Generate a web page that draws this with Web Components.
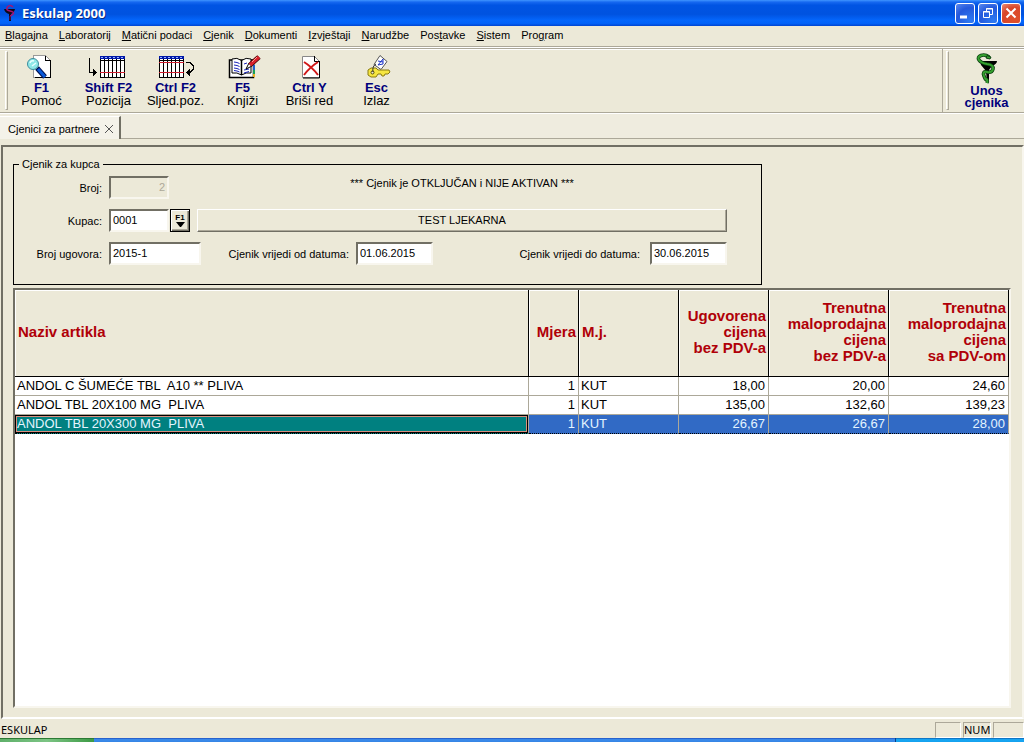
<!DOCTYPE html>
<html lang="hr">
<head>
<meta charset="utf-8">
<title>Eskulap 2000</title>
<style>
  html, body { height: 100%; }
  body {
    margin: 0;
    --face: #ece9d8;
    --shadow: #aca899;
    --dark: #716f64;
    --navy: #00007b;
    background: var(--face);
    color: #000;
    font: 11px/14px "Liberation Sans", Arial, sans-serif;
  }
</style>
</head>
<body>
<eskulap-app></eskulap-app>

<script>
const define = (name, html, setup) => {
  const template = document.createElement('template');
  template.innerHTML = html;
  customElements.define(name, class extends HTMLElement {
    constructor() {
      super();
      this.attachShadow({ mode: 'open' }).append(template.content.cloneNode(true));
    }
    connectedCallback() {
      if (setup && !this.ready) { this.ready = true; setup(this, this.shadowRoot); }
    }
  });
};

/* ---------- icons ---------- */
const ICONS = {
  help: `<svg width="30" height="24" viewBox="0 0 30 24" shape-rendering="crispEdges">
    <path d="M6.500 .5h12l5 5v17h-17z" fill="#fff" stroke="#999"/><path d="M18.500 .5v5h5M23.500 5v17.500H8" fill="none" stroke="#000"/>
    <g shape-rendering="auto"><path d="M10 13l8 9" stroke="#001050" stroke-width="5"/><path d="M11 14l7 8" stroke="#0a5ad8" stroke-width="3"/>
    <circle cx="6" cy="9" r="5.500" fill="#8fe8e8" stroke="#3c8c9c"/><path d="M3 8q1-3 4-2M5 11l4-3" stroke="#e8ffff" stroke-width="1.500" fill="none"/></g></svg>`,
  position: `<svg width="40" height="24" viewBox="0 0 40 24" shape-rendering="crispEdges">
    <rect x="11" y="1" width="25" height="22" fill="#fff"/>
    <path d="M11 5.500h25M11.500 4v19M15.500 4v19M19.500 4v19M23.500 4v19M27.500 4v19M31.500 4v19M35.500 4v19M11 22.500h25" stroke="#000"/>
    <path d="M11 2.500h25" stroke="#0018a8" stroke-width="3"/><path d="M12 2.500h24" stroke="#9ab0ff" stroke-dasharray="2 2"/><path d="M11 17.500h25" stroke="#d02030"/>
    <path d="M.5 3v14.500h6" stroke="#000" fill="none"/><path d="M4 14l4 3.500-4 3.500z"/></svg>`,
  next: `<svg width="36" height="24" viewBox="0 0 36 24" shape-rendering="crispEdges">
    <rect x="1" y="1" width="25" height="22" fill="#fff"/>
    <path d="M1 5.500h25M1.500 4v19M5.500 4v19M9.500 4v19M13.500 4v19M17.500 4v19M21.500 4v19M25.500 4v19M1 22.500h25" stroke="#000"/>
    <path d="M1 2.500h25" stroke="#0018a8" stroke-width="3"/><path d="M2 2.500h24" stroke="#9ab0ff" stroke-dasharray="2 2"/><path d="M1 7.500h25M1 17.500h25" stroke="#d02030"/>
    <path d="M28 7.500h4l3 3v4l-3 3h-2" stroke="#000" fill="none"/><path d="M32 14l-4 3.500 4 3.500z"/></svg>`,
  book: `<svg width="36" height="24" viewBox="-4 0 36 24">
    <path d="M.5 5v17.500h24V5z" fill="#fff" stroke="#000" stroke-width="1.500"/><path d="M24 10h2v12h-2z" fill="#18a058"/><path d="M24 10h2v5h-2z" fill="#1c62d0"/><path d="M24 19h2v3h-2z" fill="#e8b020"/>
    <path d="M3 4q5-2 9.500 1.500Q17 2 22 4v14q-5-1-9.500 2Q8 17 3 18z" fill="#fff" stroke="#000"/><path d="M12.500 5v15" stroke="#000" stroke-width="1.500"/>
    <path d="M5 7l3 .5 2.500 1M5 10l3 .5 2.500 1M5 13l3 .5 2.500 1M5 15.500l3 .5 2.500 1M15 9l3-1M15 15l5-1M15 18l5-1.500" stroke="#1822b8" fill="none"/>
    <path d="M17 14l3-6 3 3z" fill="#fff" stroke="#000"/><path d="M21 10l9-8" stroke="#400" stroke-width="5"/><path d="M21 10l9-8" stroke="#d8202c" stroke-width="3.500"/><path d="M23 7l5-5" stroke="#ff9a90"/></svg>`,
  remove: `<svg width="23" height="24" viewBox="-4 0 23 24">
    <path d="M.5 1.500h12l5 5v16H.5z" fill="#fff" stroke="#888"/><path d="M12.500 1v5.500H18M17.500 6v17H1" stroke="#000" fill="none"/>
    <path d="M2 7q8 5 14 13M16 7Q8 12 2 20" stroke="#d01818" stroke-width="2" fill="none"/></svg>`,
  exit: `<svg width="28" height="24" viewBox="-4 0 28 24">
    <path d="M13 .5l7 6-6 8-7-5z" fill="#fff" stroke="#555"/><path d="M11 10l5-6v5zM11 6l5 1" stroke="#1d35c8" fill="none"/>
    <path d="M4 13h5l2 2h11l1 2-2 2h-3l-1 2h-2l-1-2h-3l-2 3H4l-3-2v-5z" fill="#f6e640" stroke="#8a7a10"/><circle cx="5.500" cy="17.500" r="1.500" fill="#ece9d8" stroke="#554a00"/><path d="M6 17q-1-6 3-8" stroke="#333" fill="none"/></svg>`,
  snake: `<svg width="26" height="32" viewBox="0 0 26 32">
    <path d="M6 8h17q0 3-5 5l-3 4v12l-2 1-1-12-5-6z" fill="#000"/>
    <path d="M15 4Q11 1 7 2.500T5 7q2 3 8 4 7 1 6 5t-6 3-3 4 2 3q2 1 1 4" fill="none" stroke="#0a4010" stroke-width="3.500"/>
    <path d="M15 4Q11 1 7 2.500T5 7q2 3 8 4 7 1 6 5t-6 3-3 4 2 3q2 1 1 4" fill="none" stroke="#35a02f" stroke-width="2"/>
    <path d="M13 2.500l4 1.500-1 2-4-1z" fill="#35a02f" stroke="#0a4010"/></svg>`,
  logo: `<svg width="12" height="17" viewBox="0 0 12 17">
    <path d="M0 4h11q-1 4-4 5v7H5V9Q1 8 0 4z" fill="#120818"/>
    <path d="M9 2Q6-1 3.500 2T6 6t3 3-3 2" fill="none" stroke="#a81470" stroke-width="1.500"/><path d="M6 11v4" stroke="#701058"/></svg>`
};
define('app-icon', `
  <style>:host { display: block; } svg { display: block; overflow: visible; }</style>`,
  (host, root) => root.append(document.createRange().createContextualFragment(ICONS[host.getAttribute('name')])));

/* ---------- title bar ---------- */
define('title-bar', `
  <style>
    :host { display: flex; align-items: center; height: 26px; padding: 0 3px 0 4px; box-sizing: border-box; gap: 3px;
      background: linear-gradient(#3f95ff, #1668f0 8%, #0054e3 20%, #0053e0 55%, #0466fc 78%, #0262f8 90%, #0144d0); }
    h1 { flex: 1; margin: 0 0 0 3px; color: #fff; font: bold 13px/18px "Noto Sans", sans-serif; text-shadow: 1px 1px #0a2c86; }
    button { width: 20px; height: 21px; padding: 0; display: grid; place-items: center; border: 1px solid #fff; border-radius: 3px;
      background: radial-gradient(circle at 80% 90%, #2f7bf2, #2459dc 60%, #5b8af0); }
    button.close { background: radial-gradient(circle at 70% 80%, #e0502a, #d8472a 60%, #ec8f78); }
    svg { display: block; }
  </style>
  <app-icon name="logo"></app-icon>
  <h1><slot></slot></h1>
  <button aria-label="Minimiziraj"><svg width="14" height="14"><path d="M2 11h7" stroke="#fff" stroke-width="3"/></svg></button>
  <button aria-label="Obnovi"><svg width="14" height="14" fill="none" stroke="#fff"><path d="M5.500 5V2.500h6v6H9M5 3h7M2.500 5.500h6v6h-6zM2 6h7"/></svg></button>
  <button class="close" aria-label="Zatvori"><svg width="14" height="14"><path d="M2.500 2.500l9 9M11.500 2.500l-9 9" stroke="#fff" stroke-width="2"/></svg></button>
`);

/* ---------- menu ---------- */
define('menu-bar', `
  <style>
    :host { display: flex; gap: 11px; height: 18px; padding: 0 5px 2px; align-items: center;
      border-bottom: 1px solid var(--shadow); box-shadow: 0 1px #fff; }
  </style>
  <slot></slot>`);
define('menu-item', `
  <style>
    :host { display: block; }
    button { font: inherit; color: inherit; background: none; border: 0; padding: 0; display: block; white-space: nowrap; }
  </style>
  <button><slot></slot></button>`);

/* ---------- toolbar ---------- */
define('tool-bar', `
  <style>
    :host { display: flex; height: 65px; margin-top: 1px; box-sizing: border-box; border-top: 1px solid var(--shadow);
      border-bottom: 1px solid var(--shadow); box-shadow: 0 1px #fff, inset 0 1px #fff; }
    .band { display: flex; padding: 0 0 0 5px; }
    .main { flex: 1; border-right: 1px solid var(--shadow); }
    .side { width: 81px; box-sizing: border-box; padding-left: 3px; }
    .grip { width: 3px; margin: 2px 0; box-sizing: border-box; border: 1px solid #fff; border-right-color: var(--shadow); border-bottom-color: var(--shadow); }
    .side ::slotted(*) { flex: 1; }
  </style>
  <div class="band main"><span class="grip"></span><slot></slot></div>
  <div class="band side"><span class="grip"></span><slot name="side"></slot></div>`);
define('tool-button', `
  <style>
    :host { display: block; width: 67px; }
    button { width: 100%; height: 100%; padding: 6px 0 0; border: 0; background: none; color: inherit; font: 13px/13px "Liberation Sans", sans-serif;
      display: flex; flex-direction: column; align-items: center; white-space: nowrap; }
    b { margin-top: 2px; font-weight: bold; color: var(--navy); }
    :host([tall]) button { padding-top: 4px; }
    :host([tall]) b { margin-top: 0; line-height: 12px; }
    :host([tall]) span { display: block; }
  </style>
  <button><app-icon></app-icon><b></b><slot></slot></button>`,
  (host, root) => {
    const icon = document.createElement('app-icon');
    icon.setAttribute('name', host.getAttribute('icon'));
    root.querySelector('app-icon').replaceWith(icon);
    root.querySelector('b').innerHTML = host.getAttribute('keys').split('|').map(t => `<span>${t}</span>`).join('');
  });

/* ---------- tabs ---------- */
define('tab-strip', `
  <style>
    :host { display: flex; align-items: flex-end; height: 25px; box-sizing: border-box; margin-top: 1px; background: #efecdf; }
    .tab { display: flex; align-items: center; justify-content: space-between; height: 23px; width: 121px; box-sizing: border-box; padding: 2px 6px 0 8px;
      border-right: 2px solid var(--dark); border-top: 1px solid #fff; background: #f4f2e9; white-space: nowrap; }
    .rest { flex: 1; border-bottom: 1px solid var(--shadow); }
    button { padding: 0; border: 0; background: none; display: block; }
    svg { display: block; }
  </style>
  <div class="tab"><slot></slot><button aria-label="Zatvori karticu"><svg width="8" height="8"><path d="M0 0l8 8M8 0l-8 8" stroke="#555"/></svg></button></div>
  <div class="rest"></div>`);

/* ---------- form parts ---------- */
define('form-field', `
  <style>
    :host { display: flex; align-items: center; gap: 7px; }
    label { width: var(--label, auto); text-align: right; white-space: nowrap; }
    input { width: var(--box, 60px); height: 23px; box-sizing: border-box; padding: 0 2px 2px; margin: 0; background: #fff; color: #000;
      border: 2px solid; border-color: var(--dark) #f8f6ee #f8f6ee var(--dark); border-radius: 0; font: inherit; }
    input:disabled { background: var(--face); color: var(--shadow); text-align: right; }
  </style>
  <label for="box"></label><input id="box" type="text">`,
  (host, root) => {
    root.querySelector('label').textContent = host.getAttribute('label');
    const input = root.querySelector('input');
    input.value = host.getAttribute('value');
    input.disabled = host.hasAttribute('disabled');
  });
define('lookup-button', `
  <style>
    :host { display: block; }
    button { width: 20px; height: 23px; padding: 0; display: flex; flex-direction: column; align-items: center; justify-content: center;
      border: 1px solid #000; outline: 0; background: var(--face); color: #000; font: bold 8px/8px "Liberation Sans", sans-serif;
      box-shadow: inset 1px 1px #fff, inset -1px -1px var(--dark), inset -2px -2px var(--shadow); }
  </style>
  <button><slot></slot><svg width="9" height="6"><path d="M0 0h9L5 5H4z"/></svg></button>`);
define('price-form', `
  <style>
    :host { display: block; }
    fieldset { margin: 0; min-width: 0; max-width: 749px; height: 128px; box-sizing: border-box; padding: 5px 34px 0 0; border: 1px solid #000; }
    legend { margin-left: 5px; padding: 0 3px; }
    .rows { display: grid; gap: 10px; }
    .row { display: flex; align-items: center; }
    .lead { --label: 88px; }
    .wide { --box: 92px; }
    .from { --label: 148px; --box: 77px; }
    .to { --box: 77px; margin-left: auto; gap: 10px; }
    output { flex: 1; text-align: center; }
    .status { margin-left: 28px; align-self: flex-start; }
    .buyer { margin-left: 7px; line-height: 21px; border: 1px solid; border-color: #fff var(--dark) var(--dark) #fff; box-shadow: inset -1px -1px var(--shadow); }
    lookup-button { margin-left: 1px; }
  </style>
  <fieldset>
    <legend>Cjenik za kupca</legend>
    <div class="rows">
      <div class="row"><form-field class="lead" label="Broj:" value="2" disabled></form-field><output class="status">*** Cjenik je OTKLJUČAN i NIJE AKTIVAN ***</output></div>
      <div class="row"><form-field class="lead" label="Kupac:" value="0001"></form-field><lookup-button>F1</lookup-button><output class="buyer">TEST LJEKARNA</output></div>
      <div class="row"><form-field class="lead wide" label="Broj ugovora:" value="2015-1"></form-field><form-field class="from" label="Cjenik vrijedi od datuma:" value="01.06.2015"></form-field><form-field class="to" label="Cjenik vrijedi do datuma:" value="30.06.2015"></form-field></div>
    </div>
  </fieldset>`);

/* ---------- data grid ---------- */
define('price-table', `
  <style>
    :host { display: block; background: #fff; border: 2px solid; border-color: var(--dark) #f8f6ee #f8f6ee var(--dark); overflow: hidden; }
    table { width: 100%; border-collapse: separate; border-spacing: 0; table-layout: fixed; font: 13px/18px "Liberation Sans", sans-serif; }
    th { height: 87px; box-sizing: border-box; padding: 0 2px 2px 3px; background: var(--face); color: #b00008; text-align: left;
      font: bold 15px/16px "Liberation Sans", sans-serif; border-right: 1px solid #000; border-bottom: 1px solid #000; box-shadow: inset 1px 1px #fff; }
    td { height: 19px; box-sizing: border-box; padding: 0 3px 0 2px; border-right: 1px solid var(--shadow); border-bottom: 1px solid var(--shadow); white-space: pre; }
    .n { text-align: right; }
    col.unit { width: 50px; } col.code { width: 100px; } col.base { width: 90px; } col.retail { width: 120px; }
    tr.selected td { background: #316ac5; color: #e4f4ff; border-bottom: 1px dotted #000; }
    tr.selected td:first-child { background: #008080; box-shadow: inset 0 0 0 1px #000, inset 0 0 0 2px #d89080; }
  </style>
  <table>
    <colgroup><col><col class="unit"><col class="code"><col class="base"><col class="retail"><col class="retail"></colgroup>
    <thead><tr><th>Naziv artikla</th><th class="n">Mjera</th><th>M.j.</th><th class="n">Ugovorena<br>cijena<br>bez PDV-a</th><th class="n">Trenutna<br>maloprodajna<br>cijena<br>bez PDV-a</th><th class="n">Trenutna<br>maloprodajna<br>cijena<br>sa PDV-om</th></tr></thead>
    <tbody></tbody>
  </table>`,
  (host, root) => {
    const rows = [
      ['ANDOL C ŠUMEĆE TBL  A10 ** PLIVA', '1', 'KUT', '18,00', '20,00', '24,60'],
      ['ANDOL TBL 20X100 MG  PLIVA', '1', 'KUT', '135,00', '132,60', '139,23'],
      ['ANDOL TBL 20X300 MG  PLIVA', '1', 'KUT', '26,67', '26,67', '28,00']
    ];
    const body = root.querySelector('tbody');
    rows.forEach((cells, i) => {
      const tr = body.insertRow();
      if (i === 2) tr.className = 'selected';
      cells.forEach((text, c) => {
        const td = tr.insertCell();
        td.textContent = text;
        if (c !== 0 && c !== 2) td.className = 'n';
      });
    });
  });

/* ---------- status bar and taskbar edge ---------- */
define('status-bar', `
  <style>
    :host { display: flex; gap: 2px; height: 18px; align-items: center; padding: 1px 0 0 1px; box-sizing: border-box; font: 11px/14px "Noto Sans", sans-serif; }
    .text { flex: 1; }
    .cell { height: 16px; box-sizing: border-box; width: 26px; border: 1px solid; border-color: var(--shadow) #fff #fff var(--shadow); text-align: center; }
    .cell.mid { width: 28px; }
    .cell.end { width: 31px; }
  </style>
  <span class="text"><slot></slot></span><span class="cell"></span><span class="cell mid"><slot name="num"></slot></span><span class="cell end"></span>`);
define('task-edge', `
  <style>
    :host { display: flex; height: 4px; }
    .start { width: 94px; background: linear-gradient(90deg, #5fb06a, #7cc484 50%, #3c9a44); box-shadow: inset 0 1px #2c7a34; }
    .bar { flex: 1; background: linear-gradient(#1f50c0, #3c8cec 40%, #3484e4); }
    .tray { width: 129px; background: linear-gradient(#0c60b0, #18a8f4 40%, #14a0ee); border-left: 1px solid #0a3c88; box-sizing: border-box; }
  </style>
  <div class="start"></div><div class="bar"></div><div class="tray"></div>`);

/* ---------- application ---------- */
define('eskulap-app', `
  <style>
    :host { display: flex; flex-direction: column; min-height: 100vh; }
    u { text-underline-offset: 1px; }
    main { flex: 1; display: flex; flex-direction: column; gap: 3px; margin: 6px 0 1px 1px; padding: 10px 11px 9px 10px;
      border: 2px solid; border-color: var(--dark) #f8f6ee #fff var(--dark); }
    price-table { flex: 1; }
  </style>
  <title-bar>Eskulap 2000</title-bar>
  <menu-bar>
    <menu-item><u>B</u>lagajna</menu-item><menu-item><u>L</u>aboratorij</menu-item><menu-item><u>M</u>atični podaci</menu-item><menu-item><u>C</u>jenik</menu-item><menu-item><u>D</u>okumenti</menu-item><menu-item><u>I</u>zvještaji</menu-item><menu-item><u>N</u>arudžbe</menu-item><menu-item>Pos<u>t</u>avke</menu-item><menu-item><u>S</u>istem</menu-item><menu-item>Pro<u>g</u>ram</menu-item>
  </menu-bar>
  <tool-bar>
    <tool-button icon="help" keys="F1">Pomoć</tool-button>
    <tool-button icon="position" keys="Shift F2">Pozicija</tool-button>
    <tool-button icon="next" keys="Ctrl F2">Sljed.poz.</tool-button>
    <tool-button icon="book" keys="F5">Knjiži</tool-button>
    <tool-button icon="remove" keys="Ctrl Y">Briši red</tool-button>
    <tool-button icon="exit" keys="Esc">Izlaz</tool-button>
    <tool-button slot="side" tall icon="snake" keys="Unos|cjenika"></tool-button>
  </tool-bar>
  <tab-strip>Cjenici za partnere</tab-strip>
  <main>
    <price-form></price-form>
    <price-table></price-table>
  </main>
  <status-bar>ESKULAP<span slot="num">NUM</span></status-bar>
  <task-edge></task-edge>`);
</script>
</body>
</html>
